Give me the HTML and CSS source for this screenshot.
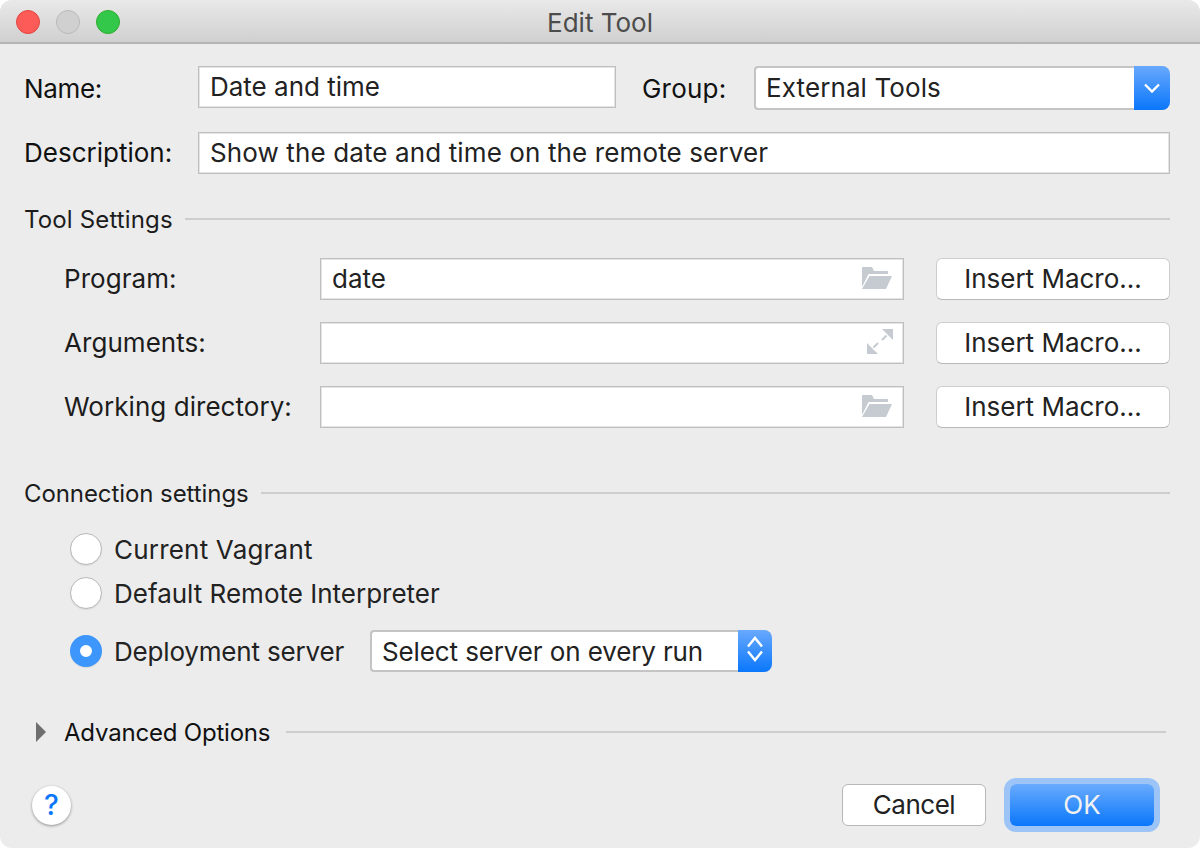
FILE: index.html
```html
<!DOCTYPE html>
<html lang="en">
<head>
    <meta charset="UTF-8">
    <title>Edit Tool</title>
    <link rel="stylesheet" href="styles.css">
</head>
<body>
    <div class="window">
        <div class="titlebar">
            <div class="lights">
                <span class="light red"></span>
                <span class="light gray"></span>
                <span class="light green"></span>
            </div>
            <span class="title">Edit Tool</span>
        </div>
        <div class="content">
            <div class="row top-row">
                <label class="top-label name-label">Name:</label>
                <div class="field name-field">Date and time</div>
                <label class="group-label">Group:</label>
                <div class="combo group-combo">
                    <span class="combo-text">External Tools</span>
                    <span class="combo-btn">
                        <svg width="16" height="11" viewBox="0 0 16 11"><path d="M1 1.500 8 8.500l7-7" class="chev"/></svg>
                    </span>
                </div>
            </div>
            <div class="row desc-row">
                <label class="top-label">Description:</label>
                <div class="field desc-field">Show the date and time on the remote server</div>
            </div>

            <div class="heading tool-heading"><span>Tool Settings</span><i class="rule"></i></div>
            <div class="row tool-row first">
                <label class="tool-label">Program:</label>
                <div class="field tool-field">date
                    <svg class="field-icon" width="30" height="22" viewBox="0 0 30 22"><path d="M0 0h10l2 4h14v3H6.500L0 20z" class="ico"/><path d="M7.500 9H30l-6 13H0z" class="ico"/></svg>
                </div>
                <div class="button macro">Insert Macro...</div>
            </div>
            <div class="row tool-row">
                <label class="tool-label">Arguments:</label>
                <div class="field tool-field">
                    <svg class="field-icon expand" width="26" height="25" viewBox="0 0 26 25"><path d="M15 0h11v11zM0 14l11 11H0z" class="ico"/><path d="M19.500 6.500 15 11M6.500 18.500 11 14" class="ico-line"/></svg>
                </div>
                <div class="button macro">Insert Macro...</div>
            </div>
            <div class="row tool-row">
                <label class="tool-label">Working directory:</label>
                <div class="field tool-field">
                    <svg class="field-icon" width="30" height="22" viewBox="0 0 30 22"><path d="M0 0h10l2 4h14v3H6.500L0 20z" class="ico"/><path d="M7.500 9H30l-6 13H0z" class="ico"/></svg>
                </div>
                <div class="button macro">Insert Macro...</div>
            </div>

            <div class="heading conn-heading"><span>Connection settings</span><i class="rule"></i></div>
            <div class="radio-row first-radio"><span class="radio"></span><span class="vagrant-label">Current Vagrant</span></div>
            <div class="radio-row"><span class="radio"></span>Default Remote Interpreter</div>
            <div class="radio-row deploy-row">
                <span class="radio checked"></span><span class="deploy-label">Deployment server</span>
                <div class="combo server-combo">
                    <span class="combo-text">Select server on every run</span>
                    <span class="combo-btn updown">
                        <svg width="16" height="26" viewBox="0 0 16 26"><path d="M1 10.500 8 2l7 8.500M1 15.500 8 24l7-8.500" class="chev"/></svg>
                    </span>
                </div>
            </div>

            <div class="heading adv-heading">
                <i class="triangle"></i><span>Advanced Options</span><i class="rule"></i>
            </div>

            <div class="footer">
                <div class="help">?</div>
                <div class="button cancel">Cancel</div>
                <div class="button ok">OK</div>
            </div>
        </div>
    </div>
</body>
</html>
```

FILE: styles.css
```css
* {
    box-sizing: border-box;
}

body {
    margin: 0;
    background-color: #fff;
    font-family: "Inter", "Liberation Sans", sans-serif;
    font-size: 26px;
    color: #222;
}

.window {
    width: 1200px;
    height: 848px;
    background-color: #ececec;
    border-radius: 12px;
    overflow: hidden;
}

.titlebar {
    position: relative;
    height: 44px;
    padding-top: 2px;
    display: flex;
    align-items: center;
    justify-content: center;
    background: linear-gradient(#e9e9e9, #d0d0d0);
    border-bottom: 2px solid #b4b4b4;
}

.title {
    color: #4c4c4c;
}

.lights {
    position: absolute;
    left: 16px;
    top: 10px;
    display: flex;
    gap: 16px;
}

.light {
    width: 24px;
    height: 24px;
    border-radius: 50%;
}

.red {
    background-color: #fc5b57;
    border: 1px solid #e2463f;
}

.gray {
    background-color: #d0d0d0;
    border: 1px solid #b9b9b9;
}

.green {
    background-color: #34c84a;
    border: 1px solid #2dac2f;
}

.content {
    padding: 22px 30px 0 24px;
}

.row {
    display: flex;
    align-items: flex-start;
}

.top-label {
    width: 174px;
    height: 44px;
    line-height: 46px;
    color: #111;
}

.name-label {
    letter-spacing: -0.35px;
}

.desc-row {
    margin-top: 22px;
}

.desc-row .top-label {
    height: 42px;
    line-height: 42px;
}

.field {
    position: relative;
    height: 42px;
    padding-left: 11px;
    line-height: 40px;
    background-color: #fff;
    border: 1px solid #bfbfbf;
    box-shadow: inset 0 0 0 1px #e4e4e4;
}

.name-field {
    width: 418px;
}

.group-label {
    width: 112px;
    height: 44px;
    margin-left: 26px;
    line-height: 46px;
    letter-spacing: 0.2px;
    color: #111;
}

.desc-field {
    flex: 1;
    letter-spacing: 0.12px;
}

.combo {
    display: flex;
    height: 44px;
    background-color: #fff;
    border: 2px solid #c4c4c4;
    border-right: 0;
    border-radius: 4px 8px 8px 4px;
}

.group-combo {
    width: 416px;
    letter-spacing: 0.1px;
}

.combo-text {
    flex: 1;
    padding-left: 10px;
    line-height: 40px;
}

.combo-btn {
    width: 36px;
    margin: -2px 0;
    display: flex;
    align-items: center;
    justify-content: center;
    background: linear-gradient(#68a9fd, #0a77fb);
    border-radius: 0 8px 8px 0;
}

.chev {
    fill: none;
    stroke: #fff;
    stroke-width: 2.4;
}

.heading {
    display: flex;
    align-items: center;
    height: 30px;
    color: #1c1c1c;
}

.heading span {
    font-size: 24px;
}

.rule {
    flex: 1;
    height: 2px;
    margin-left: 12px;
    background-color: #cdcdcd;
}

.tool-heading {
    margin-top: 30px;
    letter-spacing: 0.15px;
}

.tool-row {
    margin-top: 22px;
    padding-left: 40px;
}

.tool-row.first {
    margin-top: 24px;
}

.tool-label {
    width: 256px;
    line-height: 42px;
    letter-spacing: 0.05px;
    color: #1c1c1c;
}

.tool-field {
    width: 584px;
}

.field-icon {
    position: absolute;
    right: 11px;
    top: 8px;
}

.field-icon.expand {
    right: 10px;
    top: 6px;
}

.ico {
    fill: #c5cbd0;
}

.ico-line {
    fill: none;
    stroke: #c5cbd0;
    stroke-width: 2;
}

.button {
    height: 42px;
    line-height: 40px;
    text-align: center;
    background-color: #fff;
    border: 1px solid #cdcdcd;
    border-bottom-color: #b8b8b8;
    border-radius: 6px;
}

.macro {
    width: 234px;
    margin-left: 32px;
}

.conn-heading {
    margin-top: 50px;
    letter-spacing: -0.08px;
}

.radio-row {
    display: flex;
    align-items: center;
    height: 44px;
    padding-left: 46px;
}

.first-radio {
    margin-top: 19px;
}

.radio {
    width: 32px;
    height: 32px;
    margin-right: 12px;
    border-radius: 50%;
    background-color: #fff;
    border: 1px solid #b8b8b8;
    box-shadow: 0 1px 1px rgba(0, 0, 0, 0.08);
}

.radio.checked {
    border: 10px solid #3d96fc;
}

.vagrant-label {
    letter-spacing: 0.2px;
}

.deploy-row {
    margin-top: 14px;
}

.deploy-label {
    width: 256px;
    letter-spacing: -0.18px;
}

.server-combo {
    width: 402px;
    height: 42px;
    letter-spacing: -0.12px;
}

.updown {
    width: 34px;
    padding-bottom: 4px;
}

.adv-heading {
    margin-top: 44px;
    padding-right: 4px;
}

.adv-heading span {
    letter-spacing: -0.2px;
    color: #111;
}

.adv-heading .rule {
    margin-left: 16px;
}

.triangle {
    width: 0;
    height: 0;
    margin: 0 18px 0 12px;
    border-style: solid;
    border-width: 10px 0 10px 10px;
    border-color: transparent transparent transparent #6e6e6e;
}

.footer {
    display: flex;
    align-items: center;
    margin-top: 37px;
}

.help {
    width: 39px;
    height: 39px;
    margin-left: 8px;
    margin-right: auto;
    text-align: center;
    line-height: 39px;
    font-size: 28px;
    font-weight: 500;
    color: #0a77fb;
    background-color: #fff;
    border-radius: 50%;
    box-shadow: 0 1px 3px rgba(0, 0, 0, 0.4);
}

.cancel {
    width: 144px;
    letter-spacing: -0.5px;
    border-color: #b8b8b8;
}

.ok {
    width: 144px;
    margin-left: 24px;
    margin-right: 16px;
    color: #f2f2f2;
    border: 0;
    line-height: 42px;
    background: linear-gradient(#69abfd, #0a77fb);
    box-shadow: 0 0 0 6px #9cc4f6;
}
```
